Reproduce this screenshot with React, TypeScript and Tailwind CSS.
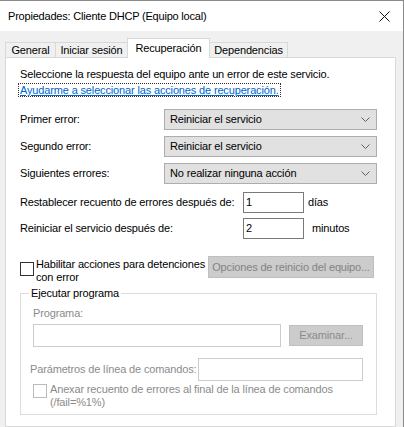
import React from "react";

const font = { fontFamily: '"Liberation Sans", Arial, sans-serif' };

const Chevron: React.FC = () => (
  <svg width="9" height="5" viewBox="0 0 9 5" className="shrink-0">
    <path d="M0.5 0.5 L4.5 4.5 L8.5 0.5" fill="none" stroke="#606060" strokeWidth="1" />
  </svg>
);

const Combo: React.FC<{ value: string }> = ({ value }) => (
  <div className="w-[213px] h-[21px] bg-[#e1e1e1] border border-[#adadad] flex items-center justify-between pl-[5px] pr-[6px]">
    <span>{value}</span>
    <Chevron />
  </div>
);

const tabs = [
  { label: "General", w: "w-[50px]" },
  { label: "Iniciar sesión", w: "w-[72px]" },
  { label: "Recuperación", w: "w-[83px]", active: true },
  { label: "Dependencias", w: "w-[78px]" },
];

export default function App() {
  return (
    <div
      className="w-[404px] h-[427px] overflow-hidden bg-[#f0f0f0] border-r border-t border-[#8a8a8a] flex flex-col text-[11px] tracking-[-0.15px] text-black leading-[13px] whitespace-nowrap"
      style={font}
    >
      {/* title bar */}
      <div className="h-[30px] bg-white flex items-center justify-between pl-[8px] pr-[13px] shrink-0">
        <span className="text-[11px] tracking-[-0.2px]">Propiedades: Cliente DHCP (Equipo local)</span>
        <svg width="11" height="11" viewBox="0 0 11 11">
          <path d="M0.5 0.5 L10.5 10.5 M10.5 0.5 L0.5 10.5" stroke="#111" strokeWidth="1" />
        </svg>
      </div>

      {/* tabs */}
      <div className="h-[26px] flex items-end pl-[5px] shrink-0">
        {tabs.map((t) =>
          t.active ? (
            <div
              key={t.label}
              className={`${t.w} h-[20px] -mb-px relative z-10 bg-white border-l border-r border-t border-[#d9d9d9] flex items-start justify-center pt-[3px]`}
            >
              {t.label}
            </div>
          ) : (
            <div
              key={t.label}
              className={`${t.w} h-[15px] bg-[#f0f0f0] border-t border-[#d9d9d9] flex items-center justify-center ${
                t.label === "Dependencias" ? "border-r" : "border-l"
              }`}
            >
              {t.label}
            </div>
          )
        )}
      </div>

      {/* panel */}
      <div className="ml-[5px] w-[391px] flex-1 bg-white border border-[#d9d9d9] pl-[14px] pt-[10px]">
        <div>Seleccione la respuesta del equipo ante un error de este servicio.</div>
        <div className="mt-[3px] -ml-px">
          <span className="text-[#0066cc] underline outline outline-1 outline-dotted outline-[#333] px-px">
            Ayudarme a seleccionar las acciones de recuperación.
          </span>
        </div>

        <div className="mt-[12px] flex flex-col gap-[6px] w-[357px]">
          {[
            ["Primer error:", "Reiniciar el servicio"],
            ["Segundo error:", "Reiniciar el servicio"],
            ["Siguientes errores:", "No realizar ninguna acción"],
          ].map(([l, v]) => (
            <div key={l} className="flex items-center justify-between">
              <span>{l}</span>
              <Combo value={v} />
            </div>
          ))}
        </div>

        <div className="mt-[8px] flex flex-col gap-[5px]">
          <div className="flex items-center">
            <span className="w-[223px]">Restablecer recuento de errores después de:</span>
            <div className="w-[61px] h-[21px] border border-[#7a7a7a] pl-[2px] flex items-center">1</div>
            <span className="ml-[4px]">días</span>
          </div>
          <div className="flex items-center">
            <span className="w-[223px]">Reiniciar el servicio después de:</span>
            <div className="w-[61px] h-[21px] border border-[#7a7a7a] pl-[2px] flex items-center">2</div>
            <span className="ml-[8px]">minutos</span>
          </div>
        </div>

        <div className="mt-[17px] flex items-start w-[354px]">
          <div className="w-[14px] h-[14px] border border-[#333] mt-[6px] shrink-0" />
          <div className="ml-[2px] w-[172px] mt-[2px]">
            Habilitar acciones para detenciones
            <br />
            con error
          </div>
          <div className="w-[166px] h-[22px] bg-[#cccccc] border border-[#bfbfbf] text-[#838383] flex items-center justify-center">
            Opciones de reinicio del equipo...
          </div>
        </div>

        {/* group box */}
        <div className="mt-[9px] w-[357px] h-[122px] border border-[#dcdcdc] relative pl-[12px] text-[#8b8b8b]">
          <span className="absolute -top-[7px] left-[8px] bg-white px-[2px] text-black">Ejecutar programa</span>
          <div className="mt-[13px]">Programa:</div>
          <div className="mt-[4px] flex items-center">
            <div className="w-[248px] h-[23px] border border-[#cccccc]" />
            <div className="ml-[8px] w-[74px] h-[21px] bg-[#cccccc] border border-[#bfbfbf] flex items-center justify-center">
              Examinar...
            </div>
          </div>
          <div className="mt-[11px] -ml-[3px] flex items-center">
            <span className="w-[168px]">Parámetros de línea de comandos:</span>
            <div className="w-[165px] h-[23px] border border-[#cccccc]" />
          </div>
          <div className="mt-[2px] flex items-start">
            <div className="w-[14px] h-[14px] border border-[#bcbcbc] mt-px shrink-0" />
            <div className="ml-[3px]">
              Anexar recuento de errores al final de la línea de comandos
              <br />
              (/fail=%1%)
            </div>
          </div>
        </div>
      </div>
    </div>
  );
}
